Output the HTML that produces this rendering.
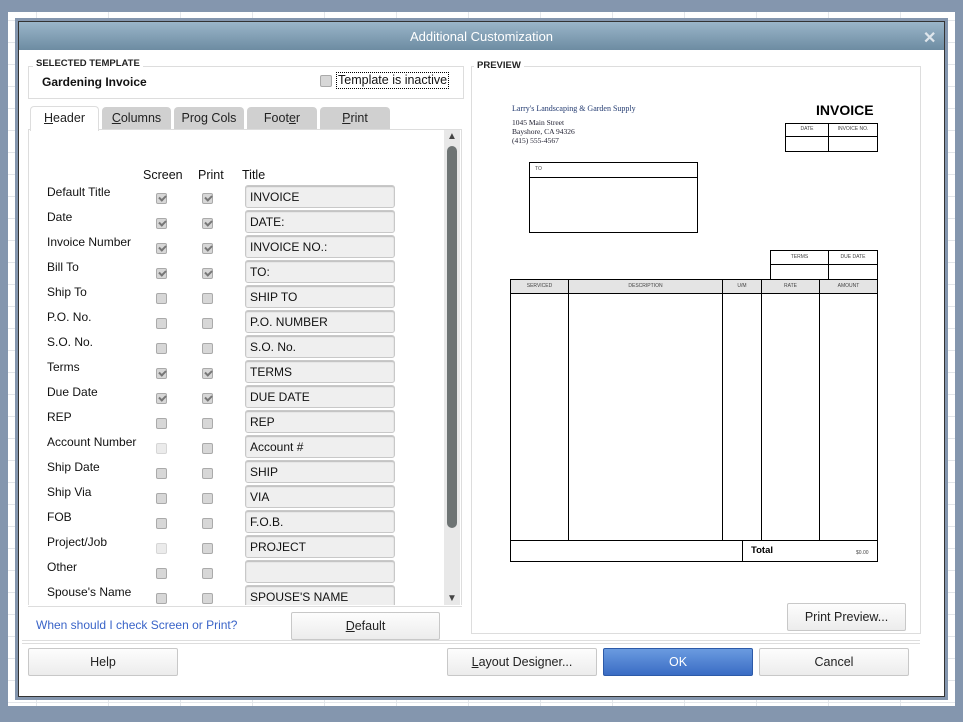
<!DOCTYPE html>
<html><head><meta charset="utf-8"><style>
*{box-sizing:border-box;margin:0;padding:0}
body{width:963px;height:722px;overflow:hidden;background:#8496ae;font-family:"Liberation Sans",sans-serif;font-size:12px;color:#111;position:relative}
.a{position:absolute}
.grid{left:8px;top:12px;width:947px;height:694px;background-color:#fff;background-image:linear-gradient(#e3e6ea 1px,transparent 1px),linear-gradient(90deg,#e3e6ea 1px,transparent 1px);background-size:72px 22px;background-position:28px 8px}
.dlg{left:15px;top:18px;width:933px;height:682px;background:#8496ae}
.inner{left:18px;top:21px;width:927px;height:676px;border:1px solid #333;background:#fff}
.title{left:19px;top:22px;width:925px;height:28px;background:linear-gradient(#9ab5c9,#6d8ca2);color:#fff;font-size:13px;text-align:center;line-height:30px}
.grp{border:1px solid #ddd}
.cb{width:11px;height:11px;border:1px solid #aaa;border-radius:2px;background:#d7d7d7}
.cb.d{background:#ebebeb;border-color:#d6d6d6}
.cb.c::after{content:"";position:absolute;left:2px;top:1px;width:5px;height:3px;border-left:2px solid #777;border-bottom:2px solid #777;transform:rotate(-45deg)}
.in{width:150px;height:23px;border:1px solid #c8c8c8;border-radius:3px;background:#efefef;padding-left:4px;line-height:22px;box-shadow:inset 0 1px 1px #bbb}
.tab{height:22px;background:#d0d0d0;border-radius:4px 4px 0 0;text-align:center;line-height:22px;font-size:12.5px;color:#222}
.btn{height:28px;border:1px solid #c8c8c8;border-radius:2px;background:linear-gradient(#fdfdfd,#ececec);text-align:center;line-height:27px;font-size:12.5px;color:#222}
.p{border:1.3px solid #000}
.s{font-family:"Liberation Sans",sans-serif;font-size:5px;color:#444;text-align:center}
</style></head><body>
<div class="a grid"></div>
<div class="a dlg"></div>
<div class="a inner"></div>
<div class="a title">Additional Customization</div>
<div class="a" style="left:923px;top:28px;color:#dfe6ec;font-size:16px;font-weight:bold">✕</div>

<div class="a grp" style="left:28px;top:66px;width:436px;height:33px"></div>
<div class="a" style="left:33px;top:58px;background:#fff;padding:0 3px;font-size:9.5px;font-weight:bold;color:#222">SELECTED TEMPLATE</div>
<div class="a" style="left:42px;top:75px;font-weight:bold;font-size:12px">Gardening Invoice</div>
<div class="a cb" style="left:320px;top:75px;width:12px;height:12px"></div>
<div class="a" style="left:336px;top:72px;border:1px dotted #000;padding:0 1px;font-size:12.5px;line-height:15px">Template is inactive</div>

<div class="a" style="left:28px;top:129px;width:434px;height:479px;border:1px solid #ddd"></div>
<div class="a tab" style="left:30px;top:106px;width:69px;height:25px;background:#fff;border:1px solid #ddd;border-bottom:none"><u>H</u>eader</div>
<div class="a tab" style="left:102px;top:107px;width:69px"><u>C</u>olumns</div>
<div class="a tab" style="left:174px;top:107px;width:70px">Pro<u>g</u> Cols</div>
<div class="a tab" style="left:247px;top:107px;width:70px">Foot<u>e</u>r</div>
<div class="a tab" style="left:320px;top:107px;width:70px"><u>P</u>rint</div>
<div class="a" style="left:444px;top:130px;width:16px;height:477px;background:#e8e8e8"></div>
<div class="a" style="left:447px;top:131px;font-size:10px;color:#444">▲</div>
<div class="a" style="left:447px;top:146px;width:10px;height:382px;background:#6e7474;border-radius:5px"></div>
<div class="a" style="left:447px;top:593px;font-size:10px;color:#444">▼</div>

<div class="a" style="left:143px;top:168px;font-size:12.5px">Screen</div>
<div class="a" style="left:198px;top:168px;font-size:12.5px">Print</div>
<div class="a" style="left:242px;top:168px;font-size:12.5px">Title</div>

<div class="a" style="left:47px;top:180px;line-height:25px">Default Title<br>Date<br>Invoice Number<br>Bill To<br>Ship To<br>P.O. No.<br>S.O. No.<br>Terms<br>Due Date<br>REP<br>Account Number<br>Ship Date<br>Ship Via<br>FOB<br>Project/Job<br>Other<br>Spouse's Name</div>

<div class="a cb c" style="left:156px;top:193px"></div><div class="a cb c" style="left:202px;top:193px"></div><div class="a in" style="left:245px;top:185px">INVOICE</div>
<div class="a cb c" style="left:156px;top:218px"></div><div class="a cb c" style="left:202px;top:218px"></div><div class="a in" style="left:245px;top:210px">DATE:</div>
<div class="a cb c" style="left:156px;top:243px"></div><div class="a cb c" style="left:202px;top:243px"></div><div class="a in" style="left:245px;top:235px">INVOICE NO.:</div>
<div class="a cb c" style="left:156px;top:268px"></div><div class="a cb c" style="left:202px;top:268px"></div><div class="a in" style="left:245px;top:260px">TO:</div>
<div class="a cb" style="left:156px;top:293px"></div><div class="a cb" style="left:202px;top:293px"></div><div class="a in" style="left:245px;top:285px">SHIP TO</div>
<div class="a cb" style="left:156px;top:318px"></div><div class="a cb" style="left:202px;top:318px"></div><div class="a in" style="left:245px;top:310px">P.O. NUMBER</div>
<div class="a cb" style="left:156px;top:343px"></div><div class="a cb" style="left:202px;top:343px"></div><div class="a in" style="left:245px;top:335px">S.O. No.</div>
<div class="a cb c" style="left:156px;top:368px"></div><div class="a cb c" style="left:202px;top:368px"></div><div class="a in" style="left:245px;top:360px">TERMS</div>
<div class="a cb c" style="left:156px;top:393px"></div><div class="a cb c" style="left:202px;top:393px"></div><div class="a in" style="left:245px;top:385px">DUE DATE</div>
<div class="a cb" style="left:156px;top:418px"></div><div class="a cb" style="left:202px;top:418px"></div><div class="a in" style="left:245px;top:410px">REP</div>
<div class="a cb d" style="left:156px;top:443px"></div><div class="a cb" style="left:202px;top:443px"></div><div class="a in" style="left:245px;top:435px">Account #</div>
<div class="a cb" style="left:156px;top:468px"></div><div class="a cb" style="left:202px;top:468px"></div><div class="a in" style="left:245px;top:460px">SHIP</div>
<div class="a cb" style="left:156px;top:493px"></div><div class="a cb" style="left:202px;top:493px"></div><div class="a in" style="left:245px;top:485px">VIA</div>
<div class="a cb" style="left:156px;top:518px"></div><div class="a cb" style="left:202px;top:518px"></div><div class="a in" style="left:245px;top:510px">F.O.B.</div>
<div class="a cb d" style="left:156px;top:543px"></div><div class="a cb" style="left:202px;top:543px"></div><div class="a in" style="left:245px;top:535px">PROJECT</div>
<div class="a cb" style="left:156px;top:568px"></div><div class="a cb" style="left:202px;top:568px"></div><div class="a in" style="left:245px;top:560px"></div>
<div class="a cb" style="left:156px;top:593px"></div><div class="a cb" style="left:202px;top:593px"></div><div class="a in" style="left:245px;top:585px">SPOUSE'S NAME</div>
<div class="a" style="left:28px;top:605px;width:434px;height:3px;background:#fff"></div>
<div class="a" style="left:28px;top:606px;width:434px;border-top:1px solid #ddd"></div>

<div class="a" style="left:36px;top:618px;color:#3a64c8;font-size:12px">When should I check Screen or Print?</div>
<div class="a btn" style="left:291px;top:612px;width:149px"><u>D</u>efault</div>

<div class="a grp" style="left:471px;top:66px;width:450px;height:568px"></div>
<div class="a" style="left:474px;top:60px;background:#fff;padding:0 3px;font-size:9.5px;font-weight:bold;color:#222">PREVIEW</div>
<div class="a" style="left:512px;top:104px;font-family:'Liberation Serif',serif;font-size:8px;color:#223a70">Larry's Landscaping &amp; Garden Supply</div>
<div class="a" style="left:512px;top:118px;font-family:'Liberation Serif',serif;font-size:7.5px;line-height:9px;color:#223">1045 Main Street<br>Bayshore, CA 94326<br>(415) 555-4567</div>
<div class="a" style="left:816px;top:102px;font-weight:bold;font-size:14px;color:#000">INVOICE</div>
<div class="a p" style="left:785px;top:123px;width:93px;height:29px"></div>
<div class="a" style="left:785px;top:136px;width:93px;border-top:1px solid #000"></div>
<div class="a" style="left:828px;top:123px;height:29px;border-left:1px solid #000"></div>
<div class="a s" style="left:786px;top:126px;width:42px">DATE</div>
<div class="a s" style="left:829px;top:126px;width:48px">INVOICE NO.</div>
<div class="a p" style="left:529px;top:162px;width:169px;height:71px"></div>
<div class="a" style="left:529px;top:177px;width:169px;border-top:1px solid #000"></div>
<div class="a s" style="left:535px;top:166px">TO</div>
<div class="a p" style="left:770px;top:250px;width:108px;height:30px"></div>
<div class="a" style="left:770px;top:264px;width:108px;border-top:1px solid #000"></div>
<div class="a" style="left:828px;top:250px;height:30px;border-left:1px solid #000"></div>
<div class="a s" style="left:771px;top:254px;width:57px">TERMS</div>
<div class="a s" style="left:829px;top:254px;width:48px">DUE DATE</div>
<div class="a" style="left:510px;top:279px;width:368px;height:14px;background:#e4e4e4"></div>
<div class="a p" style="left:510px;top:279px;width:368px;height:283px"></div>
<div class="a" style="left:510px;top:293px;width:368px;border-top:1px solid #000"></div>
<div class="a" style="left:510px;top:540px;width:368px;border-top:1px solid #000"></div>
<div class="a" style="left:568px;top:279px;height:261px;border-left:1px solid #000"></div>
<div class="a" style="left:722px;top:279px;height:261px;border-left:1px solid #000"></div>
<div class="a" style="left:761px;top:279px;height:261px;border-left:1px solid #000"></div>
<div class="a" style="left:819px;top:279px;height:261px;border-left:1px solid #000"></div>
<div class="a" style="left:742px;top:540px;height:22px;border-left:1px solid #000"></div>
<div class="a s" style="left:511px;top:283px;width:57px">SERVICED</div>
<div class="a s" style="left:569px;top:283px;width:153px">DESCRIPTION</div>
<div class="a s" style="left:723px;top:283px;width:38px">U/M</div>
<div class="a s" style="left:762px;top:283px;width:57px">RATE</div>
<div class="a s" style="left:820px;top:283px;width:57px">AMOUNT</div>
<div class="a" style="left:751px;top:545px;font-weight:bold;font-size:9.5px;color:#000">Total</div>
<div class="a s" style="left:856px;top:550px">$0.00</div>
<div class="a btn" style="left:787px;top:603px;width:119px">Print Preview...</div>

<div class="a" style="left:22px;top:640px;width:898px;height:4px;border-top:1px solid #ddd;border-bottom:1px solid #ddd"></div>
<div class="a btn" style="left:28px;top:648px;width:150px">Help</div>
<div class="a btn" style="left:447px;top:648px;width:150px"><u>L</u>ayout Designer...</div>
<div class="a btn" style="left:603px;top:648px;width:150px;background:linear-gradient(#6a9be0,#3a6cc4);border-color:#2d5aa8;color:#fff">OK</div>
<div class="a btn" style="left:759px;top:648px;width:150px">Cancel</div>
</body></html>
